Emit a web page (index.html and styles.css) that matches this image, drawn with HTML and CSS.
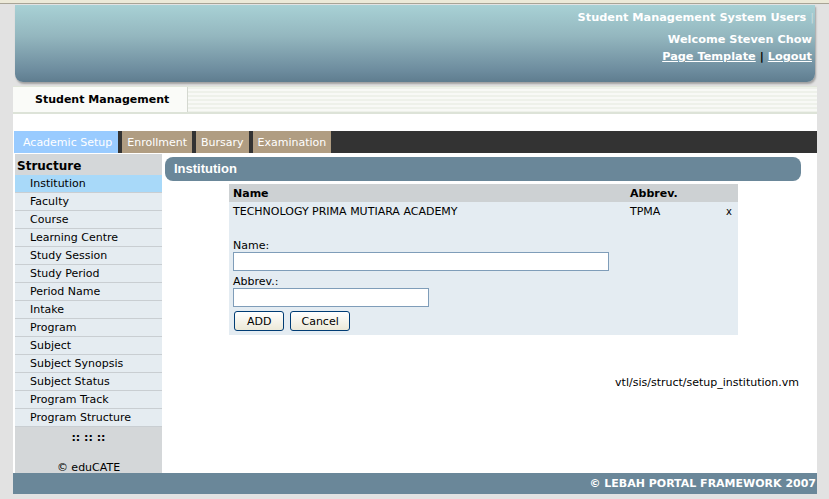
FILE: index.html
```html
<!DOCTYPE html>
<html lang="en">
<head>
    <meta charset="UTF-8">
    <title>Student Management System</title>
    <link rel="stylesheet" href="styles.css">
</head>
<body>
    <div class="chrome"></div>
    <div class="page">
        <div class="header">
            <div class="header-title">Student Management System Users <span class="bar">|</span></div>
            <div class="header-welcome">Welcome Steven Chow</div>
            <div class="header-links"><a href="#">Page Template</a> | <a href="#">Logout</a></div>
        </div>

        <div class="menubar">
            <div class="menubar-item">Student Management</div>
        </div>

        <div class="spacer"></div>

        <div class="tabs">
            <span class="tab active">Academic Setup</span>
            <span class="tab">Enrollment</span>
            <span class="tab">Bursary</span>
            <span class="tab">Examination</span>
        </div>

        <div class="main">
            <div class="sidebar">
                <div class="sidebar-title">Structure</div>
                <ul class="side-menu">
                    <li class="selected">Institution</li>
                    <li>Faculty</li>
                    <li>Course</li>
                    <li>Learning Centre</li>
                    <li>Study Session</li>
                    <li>Study Period</li>
                    <li>Period Name</li>
                    <li>Intake</li>
                    <li>Program</li>
                    <li>Subject</li>
                    <li>Subject Synopsis</li>
                    <li>Subject Status</li>
                    <li>Program Track</li>
                    <li>Program Structure</li>
                </ul>
                <div class="side-dots">:: :: ::</div>
                <div class="side-copy">© eduCATE</div>
            </div>

            <div class="content">
                <div class="content-title">Institution</div>
                <div class="panel">
                    <div class="panel-head">
                        <span class="col-name">Name</span>
                        <span class="col-abbrev">Abbrev.</span>
                    </div>
                    <div class="panel-row">
                        <span class="col-name">TECHNOLOGY PRIMA MUTIARA ACADEMY</span>
                        <span class="col-abbrev">TPMA</span>
                        <span class="col-del">x</span>
                    </div>
                    <div class="form">
                        <label>Name:</label>
                        <input type="text" class="input-name">
                        <label>Abbrev.:</label>
                        <input type="text" class="input-abbrev">
                        <div class="buttons">
                            <button class="btn-add">ADD</button>
                            <button>Cancel</button>
                        </div>
                    </div>
                </div>
                <div class="template-path">vtl/sis/struct/setup_institution.vm</div>
            </div>
        </div>

        <div class="footer">© LEBAH PORTAL FRAMEWORK 2007</div>
    </div>
</body>
</html>
```

FILE: styles.css
```css
body {
    margin: 0;
    background: #e2e2e2;
    font-family: 'DejaVu Sans', Verdana, sans-serif;
    font-size: 11px;
    color: #000;
    height: 499px;
    overflow: hidden;
}
.chrome {
    height: 3px;
    background: #ece9d8;
    border-bottom: 1px solid #a8a496;
}
.page {
    width: 804px;
    margin-left: 13px;
    background: #e2e2e2;
}
.header {
    margin: 1px 2px 0 2px;
    height: 77px;
    padding-right: 3px;
    box-sizing: border-box;
    background: linear-gradient(#a8d1d5, #94b7bf 40%, #6d8c9e 85%, #5f7d8f);
    border-radius: 0 0 8px 8px;
    box-shadow: 1px 2px 2px #a0a0a0;
    color: #fff;
    font-weight: bold;
    text-align: right;
    font-size: 11.3px;
}
.header-title {
    padding-top: 6px;
    height: 17px;
    margin-right: -2px;
}
.header-title .bar {
    color: #c8dde0;
    font-weight: normal;
}
.header-welcome {
    padding-top: 5px;
}
.header-links {
    padding-top: 4px;
    color: #000;
}
.header-links a {
    color: #fff;
}
.menubar {
    margin-top: 4px;
    height: 25px;
    background: repeating-linear-gradient(#eef1ea 0, #eef1ea 2px, #f8f9f6 2px, #f8f9f6 4px);
    border-top: 1px solid #e0e6da;
    display: flex;
}
.menubar-item {
    width: 175px;
    box-sizing: border-box;
    padding-left: 22px;
    line-height: 25px;
    font-weight: bold;
    background: #fafbf8;
    border-right: 1px solid #d4d8d0;
}
.spacer {
    height: 17px;
    background: #fff;
    border-top: 2px solid #dde3d8;
}
.tabs {
    height: 22px;
    background: #333;
    border-left: 1px solid #fff;
    display: flex;
}
.tab {
    background: #b09d82;
    color: #fff;
    padding: 0 5px;
    line-height: 23px;
    margin-right: 4px;
    font-size: 11px;
}
.tab.active {
    background: #99cbff;
    padding: 0 6px 0 9px;
}
.main {
    display: flex;
    height: 320px;
    background: #fff;
}
.sidebar {
    width: 147px;
    margin: 1px 0 0 2px;
    background: #d4d7d9;
}
.sidebar-title {
    font-weight: bold;
    font-size: 12px;
    padding: 5px 0 0 2px;
    height: 16px;
}
.side-menu {
    list-style: none;
    margin: 0;
    padding: 0;
}
.side-menu li {
    height: 17px;
    line-height: 17px;
    padding-left: 15px;
    background: #e5ecf1;
    border-bottom: 1px solid #c9ced2;
}
.side-menu li.selected {
    background: #a8d9f9;
}
.side-dots {
    text-align: center;
    font-weight: bold;
    padding-top: 4px;
}
.side-copy {
    text-align: center;
    padding-top: 17px;
}
.content {
    flex: 1;
    padding: 4px 16px 0 3px;
}
.content-title {
    height: 24px;
    line-height: 24px;
    background: #6a8799;
    border-radius: 8px;
    color: #fff;
    font-family: 'Liberation Sans', sans-serif;
    font-weight: bold;
    font-size: 13px;
    padding-left: 9px;
}
.panel {
    width: 509px;
    margin: 3px 0 0 64px;
    background: #e4ecf2;
    height: 151px;
}
.panel-head {
    background: #cdd1d3;
    height: 18px;
    line-height: 20px;
    font-weight: bold;
    display: flex;
}
.panel-row {
    display: flex;
    line-height: 19px;
}
.col-name {
    width: 397px;
    padding-left: 4px;
}
.col-abbrev {
    width: 96px;
}
.col-del {
    font-size: 10px;
}
.form {
    padding: 18px 0 0 4px;
}
.form label {
    display: block;
    line-height: 13px;
}
.form input {
    display: block;
    height: 19px;
    box-sizing: border-box;
    border: 1px solid #7f9db9;
    background: #fff;
    margin: 0 0 4px 0;
    padding: 0;
}
.input-name {
    width: 376px;
}
.input-abbrev {
    width: 196px;
}
.buttons {
    display: flex;
    gap: 6px;
    margin-top: 1px;
    padding-left: 1px;
}
.buttons button {
    font-family: 'DejaVu Sans', Verdana, sans-serif;
    font-size: 11px;
    height: 20px;
    padding: 0 10px;
    background: linear-gradient(#fff, #ece9d8);
    border: 1px solid #003c74;
    border-radius: 3px;
}
.buttons .btn-add {
    padding: 0 12px;
}
.template-path {
    text-align: right;
    margin-top: 41px;
    padding-right: 2px;
}
.footer {
    height: 21px;
    line-height: 22px;
    background: #6a8799;
    color: #fff;
    font-weight: bold;
    text-align: right;
    padding-right: 1px;
}
```
